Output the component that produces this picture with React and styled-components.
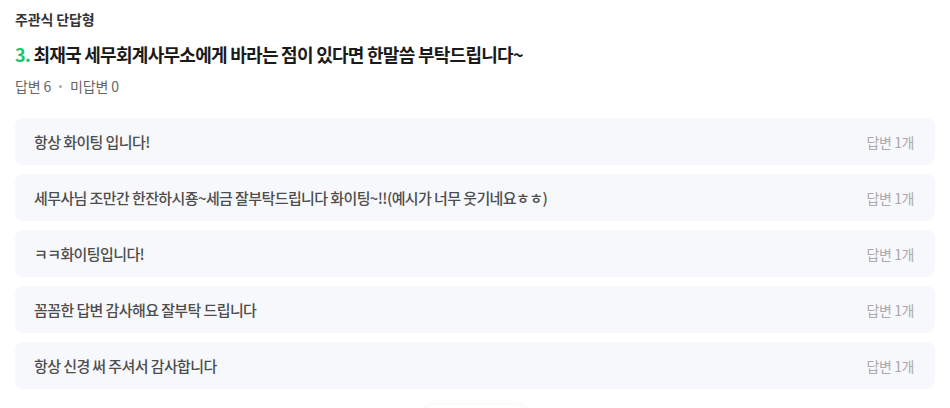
import { createGlobalStyle, styled } from "styled-components";

const GlobalStyle = createGlobalStyle`
	html, body {
		margin: 0;
		padding: 0;
		background: #ffffff;
	}
	body {
		font-family: "Noto Sans CJK KR", "Noto Sans", sans-serif;
		color: #222;
	}
`;

const answers = [
	{ text: "항상 화이팅 입니다!", count: 1 },
	{ text: "세무사님 조만간 한잔하시죵~세금 잘부탁드립니다 화이팅~!!(예시가 너무 웃기네요ㅎㅎ)", count: 1 },
	{ text: "ㅋㅋ화이팅입니다!", count: 1 },
	{ text: "꼼꼼한 답변 감사해요 잘부탁 드립니다", count: 1 },
	{ text: "항상 신경 써 주셔서 감사합니다", count: 1 },
];

function App() {
	return (
		<>
			<GlobalStyle />
			<StyledSection>
				<StyledType>주관식 단답형</StyledType>
				<StyledQuestion>
					<StyledNumber>3.</StyledNumber> 최재국 세무회계사무소에게 바라는 점이 있다면 한말씀 부탁드립니다~
				</StyledQuestion>
				<StyledStats>
					<span>답변 6</span>
					<StyledDot />
					<span>미답변 0</span>
				</StyledStats>
				<StyledList>
					{answers.map((a, i) => (
						<StyledRow key={i}>
							<StyledAnswer>{a.text}</StyledAnswer>
							<StyledCount>답변 {a.count}개</StyledCount>
						</StyledRow>
					))}
				</StyledList>
				<StyledMore />
			</StyledSection>
		</>
	);
}

const StyledSection = styled.section`
	padding: 9px 15px 0 15px;
	width: 920px;
	height: 399px;
	overflow: hidden;
`;
const StyledType = styled.div`
	font-size: 14px;
	font-weight: 700;
	color: #333;
	line-height: 20px;
	letter-spacing: -0.01em;
`;
const StyledQuestion = styled.h3`
	margin: 12px 0 0;
	font-size: 18px;
	font-weight: 700;
	color: #1a1a1a;
	line-height: 26px;
	letter-spacing: -0.04em;
`;
const StyledNumber = styled.span`
	color: #1fc46e;
`;
const StyledStats = styled.div`
	display: flex;
	align-items: center;
	gap: 8px;
	margin-top: 9px;
	font-size: 14px;
	color: #666;
	line-height: 20px;
	letter-spacing: -0.01em;
`;
const StyledDot = styled.span`
	width: 3px;
	height: 3px;
	border-radius: 50%;
	background: #aaa;
`;
const StyledList = styled.div`
	display: flex;
	flex-direction: column;
	gap: 9px;
	margin-top: 22px;
`;
const StyledRow = styled.div`
	display: flex;
	align-items: center;
	justify-content: space-between;
	height: 47px;
	padding: 0 21px 0 19px;
	background: #f7f8fb;
	border-radius: 8px;
`;
const StyledAnswer = styled.div`
	font-size: 15px;
	font-weight: 500;
	color: #4d4d4d;
	letter-spacing: -0.04em;
`;
const StyledCount = styled.div`
	font-size: 14px;
	color: #aaa;
	letter-spacing: -0.03em;
`;
const StyledMore = styled.div`
	margin: 16px auto 0;
	width: 100px;
	height: 36px;
	border-radius: 8px;
	background: #fff;
	box-shadow: 0 0 6px rgba(0, 0, 0, 0.06);
`;

export default App;
